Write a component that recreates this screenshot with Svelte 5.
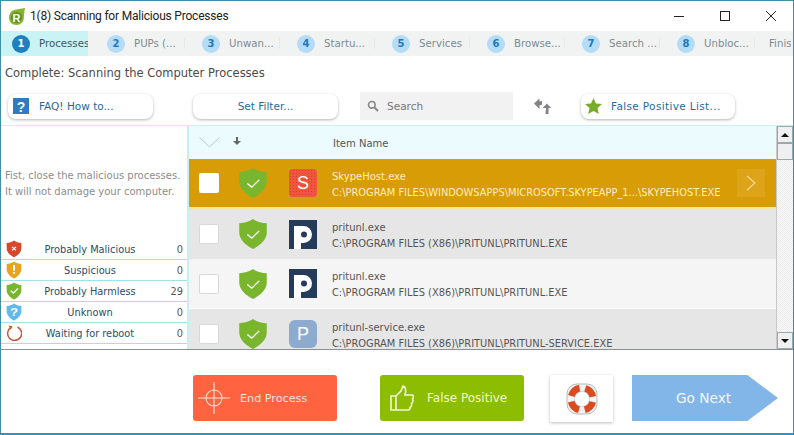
<script>
  const tabs = [
    ['1','Processes'],['2','PUPs (...'],['3','Unwan...'],['4','Startu...'],
    ['5','Services'],['6','Browse...'],['7','Search ...'],['8','Unbloc...']
  ];
  const stats = [
    ['red','Probably Malicious','0'],['amber','Suspicious','0'],['green','Probably Harmless','29'],
    ['blue','Unknown','0'],['reboot','Waiting for reboot','0']
  ];
  const shield = 'M12 1 C15 3.5 19 5 23 5 L23 14 C23 21 18 26 12 30 C6 26 1 21 1 14 L1 5 C5 5 9 3.5 12 1 Z';
  const colors = {red:'#d9472b',amber:'#e8a320',green:'#7ab52e',blue:'#5fb8ee'};
  const rows = [
    {name:'SkypeHost.exe',path:'C:\\PROGRAM FILES\\WINDOWSAPPS\\MICROSOFT.SKYPEAPP_1...\\SKYPEHOST.EXE',icon:'s',cls:'sel'},
    {name:'pritunl.exe',path:'C:\\PROGRAM FILES (X86)\\PRITUNL\\PRITUNL.EXE',icon:'p',cls:'even'},
    {name:'pritunl.exe',path:'C:\\PROGRAM FILES (X86)\\PRITUNL\\PRITUNL.EXE',icon:'p',cls:'odd'},
    {name:'pritunl-service.exe',path:'C:\\PROGRAM FILES (X86)\\PRITUNL\\PRITUNL-SERVICE.EXE',icon:'q',cls:'even'}
  ];
</script>

<div class="win">
  <header class="title">
    <svg class="logo" width="16" height="17" viewBox="0 0 16 17">
      <path d="M16 0 C12 1 8 1 5 2 C2 3 0 6 0 9.5 C0 14 3 17 7.5 17 C12 17 14.5 14 14.8 10 C15 6 15.5 3 16 0 Z" fill="#86b52b"/>
      <circle cx="7.5" cy="9.5" r="5.5" fill="#5f8f1c"/>
      <text x="7.5" y="13.5" class="logotext">R</text>
    </svg>
    <span class="title-text">1(8) Scanning for Malicious Processes</span>
    <div class="winbtns">
      <svg width="12" height="12" viewBox="0 0 12 12"><path d="M1 6.5H11" stroke="#222" stroke-width="1"/></svg>
      <svg width="12" height="12" viewBox="0 0 12 12"><rect x="1.5" y="1.5" width="9" height="9" fill="none" stroke="#222"/></svg>
      <svg width="12" height="12" viewBox="0 0 12 12"><path d="M1 1L11 11M11 1L1 11" stroke="#222" stroke-width="1"/></svg>
    </div>
  </header>

  <nav class="tabs">
    {#each tabs as t, i}
      <div class="tab" class:active={i === 0}>
        <span class="num">{t[0]}</span><span class="tlabel">{t[1]}</span>
      </div>
    {/each}
    <div class="tab finish"><span class="tlabel">Finis</span></div>
  </nav>

  <div class="status">Complete: Scanning the Computer Processes</div>

  <div class="toolbar">
    <button class="pill faq">
      <svg width="16" height="16" viewBox="0 0 16 16"><rect width="16" height="16" fill="#2b7cc0"/><text x="8" y="13.5" class="q">?</text></svg>
      <span>FAQ! How to...</span>
    </button>
    <button class="pill filter"><span>Set Filter...</span></button>
    <div class="search">
      <svg width="12" height="12" viewBox="0 0 12 12"><circle cx="4.8" cy="4.8" r="3.3" fill="none" stroke="#888" stroke-width="1.6"/><path d="M7.5 7.5L11 11" stroke="#888" stroke-width="2"/></svg>
      <span>Search</span>
    </div>
    <svg class="swap" width="18" height="18" viewBox="0 0 18 18">
      <path d="M1 6.5L6.5 1.5V4.5L9 4V7.5L6.5 8.5V12Z M9.5 11L14 6.5L18 11H15.5V17H12.5L13 11Z" fill="#808488"/>
    </svg>
    <button class="pill fp">
      <svg width="17" height="16" viewBox="0 0 17 16"><path d="M8.5 0L11 5.4L17 6.1L12.5 10.1L13.8 16L8.5 13L3.2 16L4.5 10.1L0 6.1L6 5.4Z" fill="#78ad2a"/></svg>
      <span>False Positive List...</span>
    </button>
  </div>

  <main class="main">
    <aside class="left">
      <p class="hint">Fist, close the malicious processes.<br/>It will not damage your computer.</p>
      <ul class="stats">
        {#each stats as s}
          <li>
            {#if s[0] === 'reboot'}
              <svg class="sicon" width="16" height="16" viewBox="0 0 16 16"><path d="M5 2.4A7 7 0 1 0 11.5 2" fill="none" stroke="#c9553a" stroke-width="1.5"/><path d="M2.5 0.5L6.6 1.6L4.6 4.8Z" fill="#c9553a"/></svg>
            {:else}
              <svg class="sicon" width="16" height="18" viewBox="0 0 24 31" preserveAspectRatio="none"><path d={shield} fill={colors[s[0]]}/>
                {#if s[0]==='green'}<path d="M7 15l4 4 7-8" fill="none" stroke="#fff" stroke-width="2"/>{/if}
                {#if s[0]==='red'}<path d="M9 12l6 6M15 12l-6 6" stroke="#fff" stroke-width="1.8"/>{/if}
                {#if s[0]==='amber'}<path d="M12 7v10M12 19v3" stroke="#fff" stroke-width="3"/>{/if}
                {#if s[0]==='blue'}<text x="12" y="22" class="q qs">?</text>{/if}
              </svg>
            {/if}
            <span class="slabel">{s[1]}</span><span class="scount">{s[2]}</span>
          </li>
        {/each}
      </ul>
    </aside>

    <section class="table">
      <div class="thead">
        <svg class="chev" width="21" height="11" viewBox="0 0 21 11"><path d="M0.5 0.5L10.5 10L20.5 0.5" fill="none" stroke="#bcc8cc"/></svg>
        <svg class="arrow" width="8" height="8" viewBox="0 0 8 8"><path d="M3 0H5V4H8L4 8L0 4H3Z" fill="#666"/></svg>
        <span class="col-name">Item Name</span>
      </div>
      {#each rows as r}
        <div class="row {r.cls}">
          <span class="check"></span>
          <svg class="shield" width="30" height="32" viewBox="0 0 24 31" preserveAspectRatio="none"><path d={shield} fill="#7ab52e"/><path d="M7.5 16l3.5 3.5 6-7" fill="none" stroke="#fff" stroke-width="1.1"/></svg>
          {#if r.icon === 's'}
            <span class="app app-s">S</span>
          {:else if r.icon === 'p'}
            <svg class="appsvg" width="28" height="29" viewBox="0 0 28 29"><rect width="28" height="29" fill="#243b5a"/><path d="M5 6H14.5A8.5 8.5 0 0 1 14.5 23H12V29H5Z" fill="#fff"/><circle cx="15" cy="14.5" r="3" fill="#243b5a"/></svg>
          {:else}
            <span class="app app-q">P</span>
          {/if}
          <div class="rtext"><div class="rname">{r.name}</div><div class="rpath">{r.path}</div></div>
          {#if r.cls === 'sel'}
            <span class="go"><svg width="10" height="16" viewBox="0 0 10 16"><path d="M1 1L9 8L1 15" fill="none" stroke="#f5dd9a" stroke-width="1.1"/></svg></span>
          {/if}
        </div>
      {/each}
    </section>

    <div class="sb">
      <span class="sbtn"><i class="up"></i></span>
      <span class="thumb"></span>
      <span class="track"></span>
      <span class="sbtn"><i class="down"></i></span>
    </div>
  </main>

  <footer class="foot">
    <button class="act end">
      <svg width="32" height="32" viewBox="0 0 32 32" fill="none" stroke="#fbe3d8" stroke-width="1.1"><circle cx="16" cy="16" r="8"/><path d="M0 16H32M16 0V32"/></svg>
      <span>End Process</span>
    </button>
    <button class="act fpos">
      <svg width="24" height="26" viewBox="0 0 24 26" fill="none" stroke="#f4f7d8" stroke-width="1.6"><path d="M1 11H6V25H1ZM6 11L11 6L13 1C16 2 16 6 15 10H22C24 10 23.5 13 22.5 14C23.5 16 22.5 18 21.5 18.5C22 21 21 22 20 22.5C20 24.5 19 25 18 25H6"/></svg>
      <span>False Positive</span>
    </button>
    <button class="help">
      <svg width="32" height="32" viewBox="0 0 32 32">
        <rect x="1" y="1" width="30" height="30" rx="10" fill="#f4f4f4" stroke="#a8a8a8" stroke-width="0.8"/>
        <circle cx="16" cy="16" r="11" fill="none" stroke="#dc4a1e" stroke-width="7" stroke-dasharray="11.5 5.8" stroke-dashoffset="-2.9"/>
        <circle cx="16" cy="16" r="7.5" fill="#fff" stroke="#bbb" stroke-width="0.6"/>
      </svg>
    </button>
    <button class="next"><span>Go Next</span></button>
  </footer>
</div>

<style>
  :global(body) { margin: 0; background: #fff; }
  .win {
    width: 794px; height: 435px; box-sizing: border-box; overflow: hidden;
    border: 1px solid #3f8fa8; border-bottom: 2px solid #2e92c4;
    background: #fff; display: flex; flex-direction: column;
    font-family: "DejaVu Sans", sans-serif; font-size: 10.5px; color: #555;
  }
  button { font: inherit; border: 0; padding: 0; margin: 0; }
  .title { height: 30px; flex: none; display: flex; align-items: center; padding-left: 8px; }
  .logo { margin-right: 5px; }
  .logotext { font: bold 11px "Liberation Sans", sans-serif; fill: #fff; text-anchor: middle; }
  .q { font: bold 14px "Liberation Sans", sans-serif; fill: #fff; text-anchor: middle; }
  .qs { font-size: 20px; }
  .title-text { font-family: Roboto, sans-serif; font-size: 12px; letter-spacing: -0.2px; color: #222; }
  .winbtns { margin-left: auto; display: flex; gap: 34px; padding-right: 16px; }
  .tabs { height: 25px; flex: none; display: flex; background: #f1f3f3; overflow: hidden; }
  .tab { width: 95px; flex: none; display: flex; align-items: center; padding-left: 11px; box-sizing: border-box; gap: 9px; color: #7d8a92; font-size: 10.2px; white-space: nowrap; position: relative; }
  .tab:not(.active):not(.finish)::after { content: ""; position: absolute; right: 6px; top: 7px; height: 11px; width: 1px; background: #e6e9e9; }
  .tab.active { width: 87px; margin-right: 8px; background: #c9f3f5; color: #3f5566; overflow: hidden; }
  .tab.finish { padding-left: 8px; width: 30px; overflow: hidden; }
  .num { width: 18px; height: 18px; border-radius: 50%; background: #b4dcf7; color: #2277bb; font-weight: bold; font-size: 10px; display: flex; align-items: center; justify-content: center; flex: none; }
  .active .num { background: #1f80bd; color: #fff; }
  .status { height: 18px; margin-top: 10px; padding-left: 4px; font-size: 11.5px; color: #4a4a4a; flex: none; }
  .toolbar { height: 26px; flex: none; margin-top: 9px; display: flex; align-items: center; padding-left: 7px; }
  .pill { height: 25px; background: #fff; border-radius: 8px; box-shadow: 0 1px 3px rgba(0,0,0,.3); display: flex; align-items: center; color: #1f6a9c; font-size: 10.5px; }
  .faq { width: 145px; padding-left: 5px; gap: 10px; margin-right: 40px; box-sizing: border-box; }
  .filter { width: 145px; justify-content: center; margin-right: 22px; box-sizing: border-box; }
  .search { width: 153px; height: 28px; background: #f2f2f2; display: flex; align-items: center; gap: 8px; padding-left: 7px; box-sizing: border-box; color: #777; }
  .swap { margin-left: 20px; margin-right: 30px; }
  .fp { width: 154px; padding-left: 4px; gap: 9px; box-sizing: border-box; letter-spacing: .35px; }
  .main { margin-top: 6px; flex: none; height: 225px; display: flex; border-top: 1px solid #cdeef2; border-bottom: 1px solid #8a8f92; box-sizing: border-box; }
  .left { width: 186px; flex: none; display: flex; flex-direction: column; }
  .hint { margin: 42px 0 0 4px; color: #8d8d8d; font-size: 10px; line-height: 16px; white-space: nowrap; flex: none; }
  .stats { list-style: none; margin: 39px 0 0; padding: 0; }
  .stats li { height: 21px; box-sizing: border-box; border-bottom: 1px solid #a6dfe6; display: flex; align-items: center; padding-left: 5px; color: #2c4c68; font-size: 9.8px; }
  .sicon { flex: none; }
  .slabel { flex: 1; text-align: center; padding-right: 1px; white-space: nowrap; }
  .scount { width: 24px; text-align: right; padding-right: 4px; color: #555; }
  .table { flex: 1; border-left: 2px solid #c9eef2; overflow: hidden; min-width: 0; }
  .thead { height: 33px; background: #ecfbfd; display: flex; align-items: center; padding-left: 10px; color: #555; }
  .chev { margin-right: 13px; }
  .arrow { margin-bottom: 3px; }
  .col-name { margin-left: 92px; font-size: 10px; padding-top: 2px; }
  .row { height: 50px; display: flex; align-items: center; box-sizing: border-box; position: relative; color: #555; }
  .row.sel { background: #d89c06; border-bottom: 2px solid #f7e2a4; color: #fdeebf; }
  .row.even { background: #e6e6e6; }
  .row.odd { background: #f5f5f5; border-bottom: 1px solid #fff; }
  .check { width: 20px; height: 20px; background: #fff; border: 1px solid #d8d8d8; border-radius: 2px; box-sizing: border-box; margin-left: 10px; flex: none; }
  .sel .check { border: 0; }
  .shield { margin-left: 19px; flex: none; }
  .app, .appsvg { margin-left: 21px; flex: none; }
  .app { width: 28px; height: 28px; border-radius: 4px; color: #fff; display: flex; align-items: center; justify-content: center; font-family: "Liberation Sans", sans-serif; font-size: 18px; }
  .app-s { background: #f0563e radial-gradient(circle, #d8402c 0.6px, transparent 0.8px) 0 0/3px 3px; }
  .app-q { background: #8cabcf; border-radius: 6px; }
  .rtext { margin-left: 15px; line-height: 16px; white-space: nowrap; margin-top: 3px; }
  .rname { font-size: 10px; }
  .rpath { font-size: 9.85px; }
  .go { position: absolute; left: 548px; top: 10px; width: 28px; height: 28px; background: #dda41a; display: flex; align-items: center; justify-content: center; }
  .sb { width: 16px; flex: none; display: flex; flex-direction: column; border-left: 1px solid #c9c9c9; background: repeating-conic-gradient(#e8e8e8 0 25%, #fff 0 50%) 0 0/2px 2px; }
  .sbtn { height: 17px; flex: none; background: #f0f0f0; border: 1px solid #9aa; box-sizing: border-box; display: flex; align-items: center; justify-content: center; }
  .up { border: 4px solid transparent; border-top: 0; border-bottom: 4px solid #111; }
  .down { border: 4px solid transparent; border-bottom: 0; border-top: 4px solid #111; }
  .thumb { height: 17px; flex: none; background: #f0f0f0; border: 1px solid #9aa; box-sizing: border-box; }
  .track { flex: 1; }
  .foot { flex: 1; display: flex; align-items: flex-start; padding: 25px 0 0 192px; }
  .act { height: 46px; border-radius: 3px; display: flex; align-items: center; color: #fff; font-size: 11.2px; box-sizing: border-box; }
  .end { width: 144px; background: #ff6340; padding-left: 5px; gap: 10px; margin-right: 43px; color: #fbe3d8; }
  .fpos { width: 144px; background: #8cbd00; padding-left: 10px; gap: 13px; margin-right: 26px; color: #f2f6d0; font-size: 12px; }
  .help { width: 63px; height: 47px; background: #fff; box-shadow: 0 1px 3px rgba(0,0,0,.25); display: flex; align-items: center; justify-content: center; margin-right: 18px; }
  .next { width: 146px; height: 46px; background: #82b5e8; clip-path: polygon(0 0, 79% 0, 100% 50%, 79% 100%, 0 100%); color: #f2f8ff; font-size: 13.7px; margin-left: 1px; padding-right: 3px; }
</style>
